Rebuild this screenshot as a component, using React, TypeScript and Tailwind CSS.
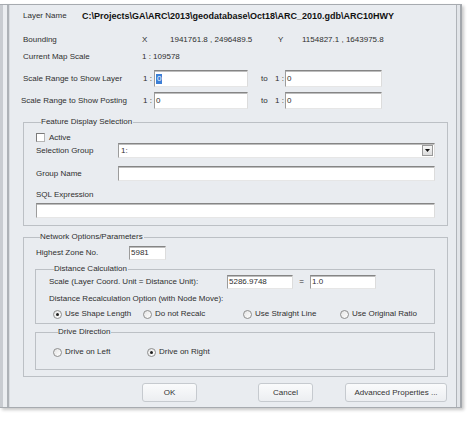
import type { ReactNode } from 'react'

const sunken =
  'border border-t-[#858585] border-l-[#9c9c9c] border-r-[#dcdcdc] border-b-[#e6e6e6] bg-white shadow-[inset_0_1px_0_#bdbdbd]'

function Field({ className = '', children }: { className?: string; children?: ReactNode }) {
  return <div className={`${sunken} flex items-center pl-[1px] ${className}`}>{children}</div>
}

function Radio({ label, checked = false, className = '' }: { label: string; checked?: boolean; className?: string }) {
  return (
    <div className={`flex items-center ${className}`}>
      <span className="w-[9px] h-[9px] rounded-full border border-[#8e8e8e] bg-gradient-to-br from-[#e4e4e4] to-white flex items-center justify-center">
        {checked && <span className="w-[3px] h-[3px] rounded-full bg-[#1f1f1f]" />}
      </span>
      <span className="ml-[3px]">{label}</span>
    </div>
  )
}

function Group({ title, className = '', children }: { title: string; className?: string; children: ReactNode }) {
  return (
    <fieldset className={`border border-[#bcc0c5] ${className}`}>
      <legend className="ml-[5px] pr-[1px] leading-[10px]">{title}</legend>
      {children}
    </fieldset>
  )
}

function Btn({ label, className = '' }: { label: string; className?: string }) {
  return (
    <button className={`h-[19px] rounded-[3px] border border-[#c6cacf] bg-gradient-to-b from-[#fafbfc] to-[#eceef1] text-[#333] text-[8px] leading-[10px] ${className}`}>
      {label}
    </button>
  )
}

export default function App() {
  return (
    <div className="w-[470px] h-[421px] bg-white pt-[4px] font-['Liberation_Sans',Arial,sans-serif] text-[8px] leading-[10px] text-[#2f2f2f]">
      <div className="flex w-[462px] h-[404px] border-t border-b border-[#a7abb0] shadow-[2px_2px_3px_rgba(0,0,0,0.22)]">
        {/* left frame edge */}
        <div className="w-[3px] bg-[#c9ccd1]" />
        <div className="w-[4px] bg-[#eceef1]" />
        <div className="w-[2px] bg-[#aeb2b7]" />
        <div className="w-[1px] bg-[#d9dce0]" />

        <div className="w-[446px] bg-[#e9ecf0] pl-[13px] pt-[5px]">
          {/* Layer info */}
          <div className="flex items-center h-[12px]">
            <span className="w-[59px]">Layer Name</span>
            <span className="font-bold text-[9px] text-[#111]">
              C:\Projects\GA\ARC\2013\geodatabase\Oct18\ARC_2010.gdb\ARC10HWY
            </span>
          </div>
          <div className="flex items-center h-[12px] mt-[12px]">
            <span className="w-[119px]">Bounding</span>
            <span className="w-[28px]">X</span>
            <span className="w-[108px]">1941761.8 , 2496489.5</span>
            <span className="w-[24px]">Y</span>
            <span>1154827.1 , 1643975.8</span>
          </div>
          <div className="flex items-center h-[12px] mt-[5px]">
            <span className="w-[119px]">Current Map Scale</span>
            <span>1 : 109578</span>
          </div>

          {/* Scale ranges */}
          <div className="flex items-center h-[17px] mt-[7px]">
            <span className="w-[120px]">Scale Range to Show Layer</span>
            <span className="w-[11px]">1 :</span>
            <Field className="w-[94px] h-[17px]">
              <span className="bg-[#3d7fd6] text-white px-[1px]">0</span>
            </Field>
            <span className="ml-[13px] w-[14px]">to</span>
            <span className="w-[10px]">1 :</span>
            <Field className="w-[97px] h-[17px]">0</Field>
          </div>
          <div className="flex items-center h-[17px] mt-[5px]">
            <span className="w-[122px] -ml-[2px]">Scale Range to Show Posting</span>
            <span className="w-[11px]">1 :</span>
            <Field className="w-[94px] h-[17px]">0</Field>
            <span className="ml-[13px] w-[14px]">to</span>
            <span className="w-[10px]">1 :</span>
            <Field className="w-[97px] h-[17px]">0</Field>
          </div>

          {/* Feature Display Selection */}
          <Group title="Feature Display Selection" className="w-[425px] mt-[8px] pl-[12px] pr-[12px] pt-[5px] pb-[7px]">
            <div className="flex items-center h-[11px]">
              <span className="w-[9px] h-[9px] border border-t-[#7a7a7a] border-l-[#7a7a7a] border-r-[#b5b5b5] border-b-[#b5b5b5] bg-white" />
              <span className="ml-[4px]">Active</span>
            </div>
            <div className="flex items-center h-[15px]">
              <span className="w-[82px]">Selection Group</span>
              <Field className="flex-1 h-[15px] justify-between">
                <span className="pl-[1px]">1:</span>
                <span className="w-[11px] h-[11px] mr-[1px] border border-[#9a9a9a] bg-gradient-to-b from-[#f7f7f7] to-[#dcdcdc] flex items-center justify-center">
                  <svg width="5" height="3" viewBox="0 0 5 3">
                    <path d="M0 0H5L2.5 3Z" fill="#111" />
                  </svg>
                </span>
              </Field>
            </div>
            <div className="flex items-center h-[15px] mt-[8px]">
              <span className="w-[82px]">Group Name</span>
              <Field className="flex-1 h-[15px]" />
            </div>
            <div className="flex items-center h-[10px] mt-[9px]">SQL Expression</div>
            <Field className="w-full h-[15px] mt-[3px]" />
          </Group>

          {/* Network Options */}
          <Group title="Network Options/Parameters" className="w-[425px] mt-[6px] pl-[11px] pr-[12px] pt-[4px] pb-[6px]">
            <div className="flex items-center h-[14px] pl-[1px]">
              <span className="w-[93px]">Highest Zone No.</span>
              <Field className="w-[37px] h-[14px]">5981</Field>
            </div>

            <Group title="Distance Calculation" className="w-[400px] mt-[4px] pl-[13px] pb-[4px]">
              <div className="flex items-center h-[14px] mt-[1px]">
                <span className="w-[178px]">Scale (Layer Coord. Unit = Distance Unit):</span>
                <Field className="w-[66px] h-[14px]">5286.9748</Field>
                <span className="w-[17px] text-center">=</span>
                <Field className="w-[66px] h-[14px]">1.0</Field>
              </div>
              <div className="flex items-center h-[10px] mt-[5px]">
                Distance Recalculation Option (with Node Move):
              </div>
              <div className="flex items-center h-[10px] mt-[5px] pl-[4px]">
                <Radio label="Use Shape Length" checked className="w-[90px]" />
                <Radio label="Do not Recalc" className="w-[100px]" />
                <Radio label="Use Straight Line" className="w-[97px]" />
                <Radio label="Use Original Ratio" />
              </div>
            </Group>

            <Group title="Drive Direction" className="w-[400px] mt-[3px] pl-[17px] pt-[10px] pb-[12px]">
              <div className="flex items-center h-[10px]">
                <Radio label="Drive on Left" className="w-[94px]" />
                <Radio label="Drive on Right" checked />
              </div>
            </Group>
          </Group>

          {/* Buttons */}
          <div className="flex mt-[6px] pl-[119px]">
            <Btn label="OK" className="w-[55px]" />
            <Btn label="Cancel" className="w-[55px] ml-[61px]" />
            <Btn label="Advanced Properties ..." className="w-[102px] ml-[32px]" />
          </div>
        </div>

        {/* right frame edge */}
        <div className="w-[1px] bg-[#b0b4b9]" />
        <div className="w-[3px] bg-[#e2e5e9]" />
        <div className="w-[2px] bg-[#a3a7ac]" />
      </div>
    </div>
  )
}
